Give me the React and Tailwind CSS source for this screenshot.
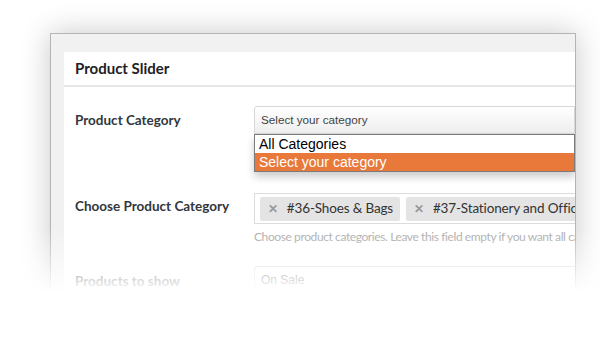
export default function App() {
  const ui = { fontFamily: "Lato, 'Open Sans', sans-serif" };
  const arial = { fontFamily: "'Liberation Sans', Arial, sans-serif" };
  return (
    <div className="relative w-[600px] h-[362px] overflow-hidden bg-white pt-[33px] pl-[50px]">
      <div className="w-[526px] h-[320px] border border-[#b4b4b4] bg-[#f1f1f1] pt-[18px] pl-[13px] shadow-[0_0_28px_rgba(0,0,0,0.22)] overflow-hidden">
        <div className="h-full bg-white" style={ui}>
          <div className="h-[35px] border-b-2 border-[#e6e6e6] pl-[11px] flex items-center">
            <span className="text-[15px] font-bold text-[#1e2125]">Product Slider</span>
          </div>
          <div className="pt-[19px] pl-[11px]">
            {/* Row 1 */}
            <div className="flex">
              <div className="w-[179px] shrink-0 pt-[4px] text-[13.5px] font-bold text-[#32373c]">Product Category</div>
              <div className="relative flex-1">
                <div className="h-[28px] border border-[#d8d8d8] rounded-tl-[3px] bg-gradient-to-b from-white to-[#eeeeee] flex items-center pl-[6px] text-[11.7px] text-[#444]" style={arial}>
                  Select your category
                </div>
                <div className="absolute left-0 right-0 top-[28px] border border-[#7b7b7b] bg-white shadow-[0_5px_8px_rgba(0,0,0,0.2)] text-[14px] z-10" style={arial}>
                  <div className="h-[18px] leading-[18px] pl-[4px] text-black">All Categories</div>
                  <div className="h-[18px] leading-[18px] pl-[4px] bg-[#e8793a] text-white">Select your category</div>
                </div>
              </div>
            </div>
            {/* Row 2 */}
            <div className="flex mt-[59px]">
              <div className="w-[179px] shrink-0 pt-[3px] text-[13.5px] font-bold text-[#32373c]">Choose Product Category</div>
              <div className="flex-1">
                <div className="h-[31px] border border-[#dcdcdc] border-r-0 flex items-center gap-[6px] pl-[5px] overflow-hidden whitespace-nowrap">
                  <div className="h-[24px] bg-[#e4e4e4] rounded-[2px] flex items-center pl-[8px] pr-[7px] text-[13.5px] tracking-[-0.15px] text-[#333]">
                    <span className="text-[12px] font-bold text-[#999] mr-[9px]">✕</span>#36-Shoes &amp; Bags
                  </div>
                  <div className="h-[24px] bg-[#e4e4e4] rounded-[2px] flex items-center pl-[8px] pr-[7px] text-[13.5px] tracking-[-0.15px] text-[#333]">
                    <span className="text-[12px] font-bold text-[#999] mr-[9px]">✕</span>#37-Stationery and Office Supplies
                  </div>
                </div>
                <div className="mt-[4px] text-[12px] tracking-[-0.4px] text-[#a7a7a7] whitespace-nowrap overflow-hidden">
                  Choose product categories. Leave this field empty if you want all categories
                </div>
              </div>
            </div>
            {/* Row 3 */}
            <div className="flex mt-[20px]">
              <div className="w-[179px] shrink-0 pt-[5px] text-[13.5px] font-bold text-[#32373c]">Products to show</div>
              <div className="flex-1">
                <div className="h-[28px] border border-[#d8d8d8] border-r-0 rounded-tl-[3px] flex items-center pl-[6px] text-[12px] text-[#444]" style={arial}>
                  On Sale
                </div>
              </div>
            </div>
          </div>
        </div>
      </div>
      <div className="absolute left-0 right-0 top-[228px] h-[64px] bg-gradient-to-b from-white/0 to-white pointer-events-none"></div>
      <div className="absolute left-0 right-0 top-[292px] bottom-0 bg-white pointer-events-none"></div>
    </div>
  );
}
